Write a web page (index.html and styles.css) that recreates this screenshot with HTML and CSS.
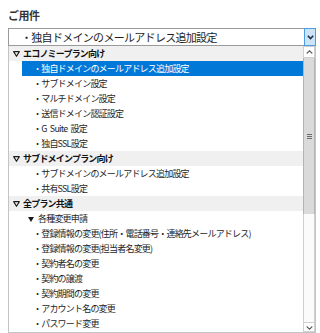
FILE: index.html
```html
<!DOCTYPE html>
<html lang="ja">
<head>
    <meta charset="UTF-8">
    <meta name="viewport" content="width=device-width, initial-scale=1.0">
    <title>ご用件</title>
    <link rel="stylesheet" href="styles.css">
</head>
<body>
    <div class="form">
        <p class="label">ご用件</p>

        <div class="select">
            <span class="select-text">・独自ドメインのメールアドレス追加設定</span>
            <span class="select-arrow">
                <svg width="7" height="5" viewBox="0 0 7 5"><path d="M0.8 0.8 L3.5 3.6 L6.2 0.8" fill="none" stroke="#1c2f4a" stroke-width="1.6"/></svg>
            </span>
        </div>

        <div class="listbox">
            <ul class="options">
                <li class="group"><svg class="tri" width="7" height="6" viewBox="0 0 7 6"><path d="M0.7 0.7 H6.3 L3.5 5.3 Z" fill="none" stroke="#1a1a1a" stroke-width="1.2" stroke-linejoin="round"/></svg>エコノミープラン向け</li>
                <li class="opt selected">・独自ドメインのメールアドレス追加設定</li>
                <li class="opt">・サブドメイン設定</li>
                <li class="opt">・マルチドメイン設定</li>
                <li class="opt">・送信ドメイン認証設定</li>
                <li class="opt">・G Suite 設定</li>
                <li class="opt">・独自SSL設定</li>
                <li class="group"><svg class="tri" width="7" height="6" viewBox="0 0 7 6"><path d="M0.7 0.7 H6.3 L3.5 5.3 Z" fill="none" stroke="#1a1a1a" stroke-width="1.2" stroke-linejoin="round"/></svg>サブドメインプラン向け</li>
                <li class="opt">・サブドメインのメールアドレス追加設定</li>
                <li class="opt">・共有SSL設定</li>
                <li class="group"><svg class="tri" width="7" height="6" viewBox="0 0 7 6"><path d="M0.7 0.7 H6.3 L3.5 5.3 Z" fill="none" stroke="#1a1a1a" stroke-width="1.2" stroke-linejoin="round"/></svg>全プラン共通</li>
                <li class="opt sub-head"><svg class="tri" width="6" height="5" viewBox="0 0 6 5"><path d="M0 0 H6 L3 5 Z" fill="#1a1a1a"/></svg>各種変更申請</li>
                <li class="opt">・登録情報の変更(住所・電話番号・連絡先メールアドレス)</li>
                <li class="opt">・登録情報の変更(担当者名変更)</li>
                <li class="opt">・契約者名の変更</li>
                <li class="opt">・契約の譲渡</li>
                <li class="opt">・契約期間の変更</li>
                <li class="opt">・アカウント名の変更</li>
                <li class="opt">・パスワード変更</li>
            </ul>

            <div class="scrollbar">
                <span class="sb-btn">
                    <svg width="7" height="4" viewBox="0 0 7 4"><path d="M0.7 3.5 L3.5 0.8 L6.3 3.5" fill="none" stroke="#606060" stroke-width="1.1"/></svg>
                </span>
                <span class="sb-thumb"><span class="grip"></span></span>
                <span class="sb-track"></span>
                <span class="sb-btn sb-down">
                    <svg width="7" height="4" viewBox="0 0 7 4"><path d="M0.7 0.5 L3.5 3.2 L6.3 0.5" fill="none" stroke="#606060" stroke-width="1.1"/></svg>
                </span>
            </div>
        </div>
    </div>
</body>
</html>
```

FILE: styles.css
```css
/* 全体 */
html, body {
    overflow: hidden;
}
body {
    margin: 0;
    padding: 8px 4px 0 8px;
    background-color: #ffffff;
    color: #1e1e1e;
    font-family: "Noto Sans CJK JP", "Noto Sans", sans-serif;
}

.form {
    width: 308px;
}

/* ラベル */
.label {
    margin: 0 0 6px;
    height: 14px;
    line-height: 14px;
    font-size: 11px;
    font-weight: bold;
    letter-spacing: -0.5px;
    color: #333;
}

/* セレクトボックス */
.select {
    box-sizing: border-box;
    height: 18px;
    display: flex;
    align-items: stretch;
    border: 1px solid #9a9a9a;
    border-right: none;
    background-color: #fff;
}
.select-text {
    flex: 1;
    padding-left: 12px;
    font-size: 11px;
    line-height: 16px;
    letter-spacing: -0.7px;
    white-space: nowrap;
    overflow: hidden;
}
.select-arrow {
    box-sizing: border-box;
    width: 12px;
    margin: -1px 0;
    display: flex;
    align-items: center;
    justify-content: center;
    background-color: #cce4f7;
    border: 1px solid #4d9de0;
}

/* リストボックス */
.listbox {
    box-sizing: border-box;
    height: 287px;
    display: flex;
    border: 1px solid #c4c4c4;
    border-top: none;
    background-color: #fff;
    overflow: hidden;
}
.options {
    flex: 1;
    margin: 0;
    padding: 0;
    list-style: none;
    font-size: 9px;
    letter-spacing: -0.8px;
    word-spacing: 2px;
    white-space: nowrap;
    overflow: hidden;
}
.options li {
    height: 15px;
    line-height: 15px;
}
.tri {
    margin-right: 3px;
    vertical-align: 0;
}
.group {
    padding-left: 4px;
    font-weight: bold;
    background-color: #f0f0f0;
    color: #111;
}
.opt {
    margin-left: 13px;
    padding-left: 11px;
}
.opt.sub-head {
    padding-left: 6px;
}
.opt.sub-head .tri {
    margin-right: 4px;
}
.opt.selected {
    background-color: #0078d7;
    color: #fff;
}

/* スクロールバー */
.scrollbar {
    width: 12px;
    display: flex;
    flex-direction: column;
    background-color: #f0f0f0;
}
.sb-btn {
    box-sizing: border-box;
    height: 12px;
    display: flex;
    align-items: center;
    justify-content: center;
    background-color: #fff;
    border: 1px solid #d0d0d0;
}
.sb-down {
    height: 10px;
    align-items: flex-start;
    padding-top: 3px;
}
.sb-thumb {
    box-sizing: border-box;
    height: 156px;
    display: flex;
    align-items: center;
    justify-content: center;
    background-color: #dadada;
    border-left: 1px solid #b4b4b4;
    border-right: 1px solid #b4b4b4;
}
.grip {
    width: 5px;
    height: 5px;
    background: repeating-linear-gradient(#6a6a6a 0 1px, transparent 1px 2px);
}
.sb-track {
    flex: 1;
    box-sizing: border-box;
    background-color: #fbfbfb;
    border-left: 1px solid #cfcfcf;
    border-right: 1px solid #cfcfcf;
}
```
